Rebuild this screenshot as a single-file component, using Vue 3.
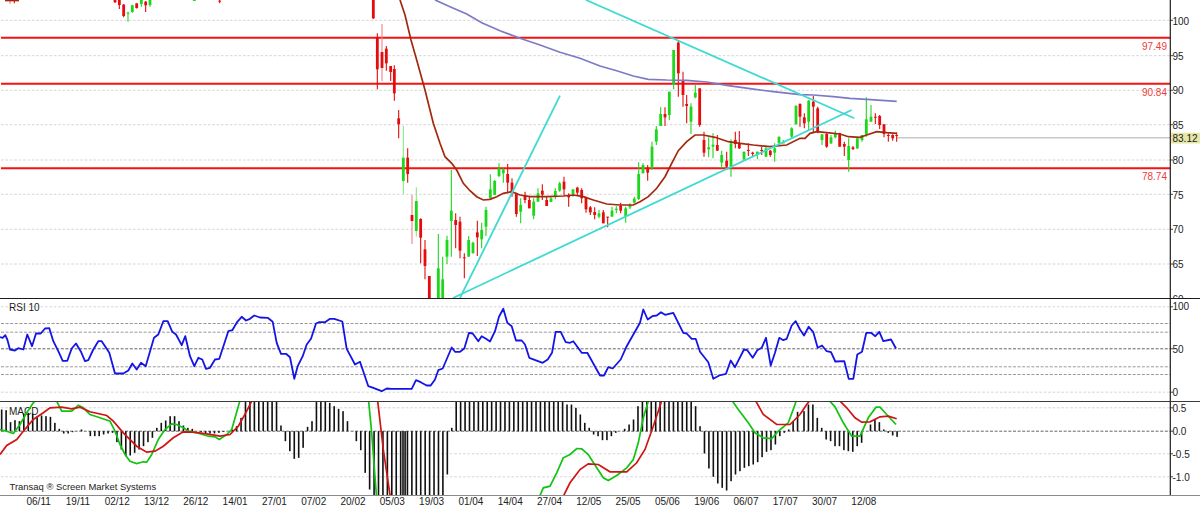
<script setup>
const RED = '#e40c0c'
const GREEN = '#1cd81c'
const PALE_RED = '#f08080'
const PALE_GREEN = '#88e888'

// [x, kind, wickTop, bodyTop, bodyBottom, wickBottom], read at 3x scale, with the x offset of each crop
const seg1 = [
  [30,'R',0,0,1,12],[43,'r',0,0,1,10],[345,'r',0,0,7,8],[358,'r',0,0,15,27],[371,'r',12,14,48,52],[384,'g',35,38,39,65],
  [397,'g',14,16,36,38],[410,'R',8,10,24,27],[424,'g',0,0,12,20],[437,'r',3,5,16,36],[450,'g',0,0,15,20],[583,'g',0,0,1,3],
  [659,'r',0,2,5,10],[1120,'r',0,0,55,57],[1132,'r',100,112,208,268],[1146,'R',72,156,204,243],[1159,'r',138,146,190,212],
  [1172,'r',198,198,216,243],[1183,'r',196,207,280,302],[1196,'r',330,355,373,415]
]
const seg2 = [
  [10,'G',378,473,543,582],[23,'r',445,473,522,548],[36,'R',585,645,663,732],[49,'G',562,603,693,710],[62,'r',655,657,713,790],
  [75,'r',720,748,798,838],[88,'r',828,828,895,895],[115,'g',702,805,895,895],[128,'g',770,838,895,895],[141,'g',707,720,770,792],
  [154,'g',510,632,663,770],[167,'r',640,660,675,745],[180,'r',650,665,752,775],[193,'r',760,772,774,835],[206,'g',708,720,770,770],
  [219,'g',725,728,760,760],[232,'r',662,697,712,768],[245,'g',668,690,718,745],[258,'g',620,630,680,708],[271,'g',523,568,595,595],
  [284,'g',540,543,585,585],[297,'g',490,505,528,532],[310,'g',505,508,520,548],[323,'r',492,522,548,578],[336,'r',535,548,580,590],
  [349,'r',578,582,642,650],[362,'g',595,615,635,670],[375,'r',575,588,600,610],[388,'r',590,600,625,625],[401,'g',595,605,647,658],
  [414,'g',565,580,605,605],[427,'r',553,572,584,600],[440,'r',590,600,618,618],[453,'g',590,595,606,606],[466,'g',565,573,590,598],
  [479,'g',545,550,572,575],[492,'r',530,545,568,585],[506,'r',580,585,592,620],[519,'g',568,568,582,590],[532,'r',560,563,578,585],
  [545,'r',565,570,595,610],[558,'r',590,592,628,638],[571,'r',618,622,637,645],[584,'r',622,636,645,658],[597,'g',630,640,650,655],
  [610,'r',630,637,670,670],[623,'r',650,650,653,682],[636,'g',620,632,650,650],[649,'g',618,626,630,640],[662,'r',608,618,632,640],
  [677,'g',620,625,650,668],[690,'g',610,615,622,628],[703,'g',590,596,608,610],[716,'g',487,522,597,600],[729,'g',490,495,520,520],
  [743,'r',495,503,518,542],[756,'g',425,440,505,510],[769,'g',378,388,425,435],[782,'g',322,342,378,378],[795,'r',322,342,352,378],
  [808,'g',275,275,345,360],[821,'g',150,150,255,268],[835,'r',120,128,220,290],[849,'r',215,240,285,320],[860,'r',285,312,318,370],
  [873,'g',310,320,365,402],[886,'g',255,278,292,295],[899,'r',265,265,375,380],[912,'r',395,420,458,470],[926,'g',412,442,448,472],
  [939,'g',400,434,440,475],[952,'r',405,435,452,452],[965,'g',452,465,488,505],[980,'r',455,482,500,510],[993,'g',418,430,500,530],
  [1006,'r',395,420,432,445],[1018,'r',393,430,445,447],[1032,'g',455,455,478,482],[1045,'r',430,450,453,468],[1058,'r',455,458,462,470],
  [1072,'g',455,455,465,478],[1085,'r',440,450,452,465],[1098,'g',440,445,470,472],[1111,'r',450,452,465,470],[1124,'g',430,445,458,485],
  [1137,'g',410,410,430,430],[1150,'g',420,425,430,430],[1175,'g',382,385,410,415],[1188,'g',315,318,372,375]
]
const seg3 = [
  [0,'r',310,312,350,380],[13,'r',340,352,370,385],[26,'g',300,302,365,390],[40,'r',288,305,320,400],[53,'r',320,325,395,400],
  [66,'g',403,403,420,435],[80,'r',400,402,440,443],[93,'g',405,412,430,432],[106,'g',392,402,412,415],[119,'r',398,400,440,440],
  [133,'r',425,432,440,468],[146,'g',415,438,480,515],[159,'r',438,442,447,450],[172,'g',415,415,445,447],[186,'g',405,405,420,425],
  [199,'g',292,358,403,410],[213,'g',315,350,365,365],[226,'r',340,350,352,372],[239,'r',345,348,375,387],[252,'r',372,373,402,412],
  [265,'r',400,405,407,425],[278,'r',403,405,415,422],[290,'r',397,405,407,425]
]
const toCandle = (off) => ([x, kind, wt, bt, bb, wb]) => {
  const dark = kind === 'r' || kind === 'R'
  return {
    x: +(off + x / 3).toFixed(2),
    fill: dark ? RED : GREEN,
    wick: kind === 'R' ? PALE_RED : kind === 'G' ? PALE_GREEN : dark ? RED : GREEN,
    wt: wt / 3, wb: wb / 3, bt: bt / 3, bh: Math.max(bb - bt, 3) / 3
  }
}
const candles = [...seg1.map(toCandle(0)), ...seg2.map(toCandle(400)), ...seg3.map(toCandle(800))]

const pts = (off, arr, yOff = 0) => {
  let s = ''
  for (let i = 0; i < arr.length; i += 2) s += `${(off + arr[i] / 3).toFixed(1)},${(yOff + arr[i + 1] / 3).toFixed(1)} `
  return s.trim()
}
const join = (...p) => p.join(' ')

const ma = join(
  pts(400, [0,0,15,45,33,120,50,180,75,270,100,370,120,430,135,470,155,490,170,510,190,550,210,572,230,590,250,600,270,598,290,590,310,580,335,575,360,585,390,590,440,590,490,588,520,585,550,590,580,600,620,612,660,615,700,615,720,605,745,590,770,565,795,530,815,490,835,452,860,425,885,405,910,405,945,412,985,425,1020,430,1060,435,1110,440,1160,435,1200,415]),
  pts(800, [15,415,30,400,50,395,80,398,120,402,145,410,180,412,200,405,230,395,260,398,290,400])
)
const slow = join(
  pts(400, [105,0,150,20,200,42,245,68,300,92,360,115,420,135,480,157,540,175,600,198,650,212,700,228,745,238,800,240,860,241,920,246,980,256,1050,266,1120,275,1200,284]),
  pts(800, [40,285,100,290,150,295,200,298,290,304])
)
const priceGrid = [20.3, 55.7, 90.3, 124.7, 160, 194.3, 229.3, 264]
const priceLabels = [['100',24.5],['95',59.5],['90',94.3],['85',129],['80',164],['75',198.5],['70',233.3],['65',268],['60',302.5]]
const levels = [
  { y: 37.8, label: '97.49', ty: 49.5 },
  { y: 83.7, label: '90.84', ty: 95.5 },
  { y: 168.3, label: '78.74', ty: 180 }
]
const trends = [
  { x1: 586, y1: 0, x2: 854.3, y2: 118.3 },
  { x1: 453, y1: 298, x2: 851.7, y2: 110 },
  { x1: 460, y1: 298, x2: 560, y2: 95.7 }
]

const rsi = join(
  pts(0, [0,143,8,145,16,137,22,150,30,180,45,183,55,176,70,180,82,135,96,170,108,132,122,132,135,117,148,116,160,155,175,185,188,214,202,214,215,177,228,162,242,185,255,215,265,212,280,180,295,155,305,155,318,175,328,190,345,252,370,252,385,243,397,222,410,240,423,220,437,230,462,145,475,135,490,95,503,95,517,127,528,135,545,167,556,140,570,200,583,230,595,205,607,210,618,238,630,235,645,210,658,208,685,125,697,122,712,97,725,82,738,93,750,88,763,78,780,84,803,85,818,97,830,160,843,193,858,193,870,203,883,268,893,230,908,200,920,165,933,148,948,102,958,98,975,98,990,88,1003,88,1027,96,1040,178,1065,225,1080,217,1105,290,1120,295,1145,305,1160,297,1175,298,1200,298], 290),
  pts(400, [35,298,48,272,62,278,80,288,92,288,105,270,115,242,128,237,155,174,165,187,180,187,193,177,207,130,218,132,235,155,245,140,258,148,270,156,285,125,297,82,310,58,322,100,335,110,348,153,365,153,375,165,388,205,428,220,443,210,456,190,467,127,482,127,497,158,510,160,520,155,545,190,562,190,600,258,612,258,625,233,638,237,662,210,680,170,720,100,730,60,743,90,757,80,770,78,783,68,795,76,820,70,835,100,850,130,860,132,875,148,887,148,900,187,925,218,940,268,958,258,978,253,992,213,1005,233,1032,180,1042,182,1058,205,1072,182,1085,175,1098,145,1112,228,1125,190,1138,145,1150,152,1160,148,1175,108,1187,95,1200,120], 290),
  pts(800, [12,138,26,112,40,128,53,175,66,168,80,185,93,188,106,216,133,215,146,268,160,268,172,195,186,187,199,130,213,130,226,140,238,127,250,155,273,150,288,177], 290)
)
const rsiGrid = [
  { y: 307.3, cls: 'grid-light' }, { y: 324, cls: 'grid-mid' }, { y: 332.7, cls: 'grid-mid' }, { y: 349.3, cls: 'grid-dark' },
  { y: 367.3, cls: 'grid-mid' }, { y: 375, cls: 'grid-mid' }, { y: 392.7, cls: 'grid-light' }
]
const rsiLabels = [['100',310.5],['50',353.5],['0',396.5]]

const rep = (v, n) => Array(n).fill(v)
const barSegs = [
  [5, 0, [360,362,398,392,395,372,370,372,380,378,380,382,400,418,432,432,428,425,420,425,440,440,440,435,432,430,458,480,500,498,490,480,470,458,445,415,400,393,380,380,395,408,415,418,425,428,432,432,432,430,427,425,420,410,385,...rep(337,8),408,455,485,508,505,475,412,395,337,337,337,340,350,358,365,395,425,455,482,550,600,...rep(620,8)]],
  [9, 400, [...rep(620,10),555,415,...rep(337,25),345,345,355,375,400,415,435,440,452,452,440,430,425,418,405,390,350,...rep(337,12),350,410,492,537,562,582,595,603,575,555,545,535,530,525,518,503,487,482,465,440,430,420,395,367]],
  [12, 800, [365,345,345,385,415,450,455,470,470,482,485,487,470,460,425,405,390,398,420,430,438,442]]
]
const bars = barSegs.flatMap(([start, off, vals]) =>
  vals.map((v, i) => ({ x: +(off + (start + 13.3 * i) / 3).toFixed(2), y: 290 + Math.min(v, 425) / 3, h: Math.abs(v - 425) / 3 }))
)
const macdGreen = [
  pts(0, [0,420,20,425,40,432,60,405,80,370,100,340,115,325,165,325,185,365,215,365,235,347,250,355,270,375,300,385,330,395,345,425,360,465,375,495,390,515,410,522,430,517,440,518,455,495,475,450,495,420,515,403,530,405,550,415,565,425,590,430,625,440,645,442,658,450,680,435,695,420,708,375,722,325], 290),
  pts(0, [1105,325,1115,430,1130,630], 290),
  pts(400, [415,630,430,595,450,590,470,550,490,505,510,495,530,477,545,478,565,495,590,535,610,565,625,573,650,558,680,535,700,510,715,460,730,385,748,325], 290),
  pts(400, [990,325,1015,360,1045,400,1065,430,1090,445,1115,447,1135,425,1165,400,1185,345,1192,325], 290),
  pts(800, [80,325,105,352,130,400,155,440,180,440,205,385,228,353,240,353,260,375,288,405], 290)
]
const macdRed = [
  pts(0, [0,495,20,468,50,450,70,425,100,390,130,370,150,355,185,353,215,358,240,353,270,367,320,378,340,395,370,430,410,470,440,488,465,485,490,470,520,445,550,427,580,428,620,433,660,440,690,435,715,410,740,365,760,325], 290),
  pts(0, [1132,325,1150,480,1172,630], 290),
  pts(400, [485,630,510,580,540,540,565,523,595,525,630,547,680,547,710,520,735,480,760,410,788,325], 290),
  pts(400, [1062,325,1090,375,1130,405,1170,405,1200,375], 290),
  pts(800, [0,375,20,345,36,325], 290),
  pts(800, [110,325,140,355,165,385,185,398,210,397,240,382,265,380,290,388], 290)
]
const macdGrid = [
  { y: 408.3, cls: 'grid-light' }, { y: 431.7, cls: 'grid-dark' }, { y: 454.3, cls: 'grid-light' }, { y: 477.3, cls: 'grid-light' }
]
const macdLabels = [['0.5',412.7],['0.0',435.7],['-0.5',458.3],['-1.0',481.7]]

const dates = ['06/11','19/11','02/12','13/12','26/12','14/01','27/01','07/02','20/02','05/03','19/03','01/04','14/04','27/04','12/05','25/05','05/06','19/06','06/07','17/07','30/07','12/08']
</script>

<template>
  <main class="chart">
    <svg class="pane pane-price" viewBox="0 0 1200 298" role="img" aria-label="Price chart">
      <g v-for="y in priceGrid" :key="y">
        <line class="grid-light" x1="1" x2="1170" :y1="y" :y2="y" />
        <line class="tick" x1="1170" x2="1173" :y1="y" :y2="y" />
      </g>
      <line class="last" x1="897" x2="1170" y1="137.7" y2="137.7" />
      <line v-for="l in levels" :key="l.y" class="level" x1="1" x2="1170" :y1="l.y" :y2="l.y" />
      <g v-for="c in candles" :key="c.x">
        <line :x1="c.x" :x2="c.x" :y1="c.wt" :y2="c.wb" :stroke="c.wick" stroke-width="1.1" />
        <rect :x="c.x - 1.4" :y="c.bt" width="2.8" :height="c.bh" :fill="c.fill" />
      </g>
      <line class="ma" x1="5" x2="19" y1="0.5" y2="0.5" />
      <polyline class="slow" :points="slow" />
      <polyline class="ma" :points="ma" />
      <line v-for="t in trends" :key="t.x1" class="trend" :x1="t.x1" :y1="t.y1" :x2="t.x2" :y2="t.y2" />
      <text v-for="l in levels" :key="l.label" class="level-text" x="1167" :y="l.ty">{{ l.label }}</text>
      <line class="axis" x1="1170.3" x2="1170.3" y1="0" y2="298" />
      <text v-for="[t, y] in priceLabels" :key="t" class="label" x="1172.5" :y="y">{{ t }}</text>
      <rect x="1171" y="132.7" width="29" height="10.8" fill="#e6e6a6" />
      <text class="label" x="1172.5" y="141.6">83.12</text>
    </svg>

    <svg class="pane pane-rsi" viewBox="0 299.5 1200 102" role="img" aria-label="RSI 10">
      <g v-for="g in rsiGrid" :key="g.y">
        <line :class="g.cls" x1="1" x2="1170" :y1="g.y" :y2="g.y" />
      </g>
      <line class="tick" x1="1170" x2="1173" y1="307.3" y2="307.3" />
      <line class="tick" x1="1170" x2="1173" y1="349.3" y2="349.3" />
      <line class="tick" x1="1170" x2="1173" y1="392.7" y2="392.7" />
      <polyline class="rsi" :points="rsi" />
      <text class="label" x="9" y="311.5">RSI 10</text>
      <line class="axis" x1="1170.3" x2="1170.3" y1="299" y2="402" />
      <text v-for="[t, y] in rsiLabels" :key="t" class="label" x="1172.5" :y="y">{{ t }}</text>
    </svg>

    <svg class="pane pane-macd" viewBox="0 402.5 1200 93" role="img" aria-label="MACD">
      <g v-for="g in macdGrid" :key="g.y">
        <line :class="g.cls" x1="1" x2="1170" :y1="g.y" :y2="g.y" />
        <line class="tick" x1="1170" x2="1173" :y1="g.y" :y2="g.y" />
      </g>
      <text class="label" x="9" y="415">MACD</text>
      <rect v-for="b in bars" :key="b.x" class="bar" :x="b.x - 0.8" :y="b.y" width="1.6" :height="b.h" />
      <polyline v-for="p in macdGreen" :key="p" class="macd-green" :points="p" />
      <polyline v-for="p in macdRed" :key="p" class="macd-red" :points="p" />
      <text class="label small" x="9.5" y="490">Transaq ® Screen Market Systems</text>
      <line class="axis" x1="1170.3" x2="1170.3" y1="402" y2="496" />
      <text v-for="[t, y] in macdLabels" :key="t" class="label" x="1172.5" :y="y">{{ t }}</text>
    </svg>

    <div class="dates">
      <span v-for="d in dates" :key="d" class="date">{{ d }}</span>
    </div>
  </main>
</template>

<style scoped>
.chart {
  width: 1200px;
  height: 508px;
  background: #fff;
  display: flex;
  flex-direction: column;
  overflow: hidden;
  font-family: "Liberation Sans", Arial, sans-serif;
}
.pane {
  display: block;
  width: 1200px;
  flex: none;
  overflow: hidden;
  font-family: "Liberation Sans", Arial, sans-serif;
}
.pane-price { height: 298px; }
.pane-rsi { height: 102px; border-top: 1.5px solid #1c1c1c; box-sizing: content-box; }
.pane-macd { height: 93px; border-top: 1.5px solid #3a3a3a; box-sizing: content-box; }
.dates {
  border-top: 1.5px solid #8a8a8a;
  flex: 1;
  display: flex;
  padding-left: 19px;
  font-size: 10px;
  line-height: 11px;
  color: #222;
}
.date { flex: none; width: 39.3px; text-align: center; }
.grid-light { stroke: #d6d6d6; stroke-width: 1; stroke-dasharray: 2.6 1.8; }
.grid-mid { stroke: #9a9a9a; stroke-width: 1; stroke-dasharray: 3 1.6; }
.grid-dark { stroke: #666; stroke-width: 1; stroke-dasharray: 3 1.6; }
.tick { stroke: #444; stroke-width: 1; }
.axis { stroke: #1c1c1c; stroke-width: 1.2; }
.last { stroke: #c8c8c8; stroke-width: 1.4; }
.level { stroke: #f41212; stroke-width: 2; }
.level-text { fill: #f03a3a; font-size: 10px; text-anchor: end; }
.label { fill: #222; font-size: 10px; }
.small { font-size: 9.45px; }
.ma { fill: none; stroke: #a3280e; stroke-width: 1.7; }
.slow { fill: none; stroke: #7c7ac6; stroke-width: 1.7; }
.trend { stroke: #3fdad2; stroke-width: 1.8; }
.rsi { fill: none; stroke: #1414e6; stroke-width: 1.8; stroke-linejoin: round; }
.bar { fill: #111; }
.macd-green { fill: none; stroke: #12c412; stroke-width: 1.7; }
.macd-red { fill: none; stroke: #d01414; stroke-width: 1.7; }
</style>
